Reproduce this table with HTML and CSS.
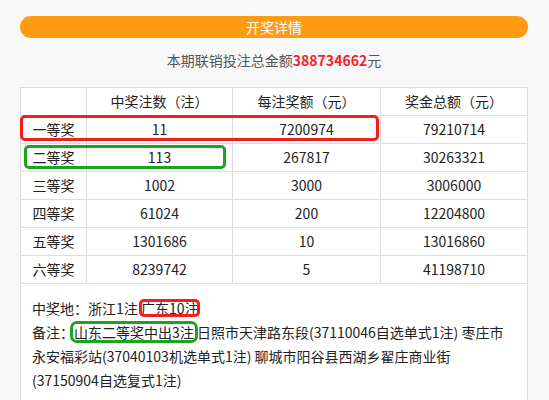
FILE: index.html
```html
<!DOCTYPE html>
<html lang="zh-CN">
<head>
<meta charset="utf-8">
<title>开奖详情</title>
<link rel="stylesheet" href="styles.css">
</head>
<body>
<div class="wrap">
  <div class="bar">开奖详情</div>
  <div class="sum">本期联销投注总金额<b class="amt">388734662</b>元</div>
  <div class="tbl-wrap">
    <table class="tbl">
      <colgroup><col class="c1"><col class="c2"><col class="c3"><col class="c4"></colgroup>
      <tr><th></th><th>中奖注数（注）</th><th>每注奖额（元）</th><th>奖金总额（元）</th></tr>
      <tr><td>一等奖</td><td>11</td><td>7200974</td><td>79210714</td></tr>
      <tr><td>二等奖</td><td>113</td><td>267817</td><td>30263321</td></tr>
      <tr><td>三等奖</td><td>1002</td><td>3000</td><td>3006000</td></tr>
      <tr><td>四等奖</td><td>61024</td><td>200</td><td>12204800</td></tr>
      <tr><td>五等奖</td><td>1301686</td><td>10</td><td>13016860</td></tr>
      <tr><td>六等奖</td><td>8239742</td><td>5</td><td>41198710</td></tr>
    </table>
    <div class="mark mark-red"></div>
    <div class="mark mark-green"></div>
  </div>
  <div class="notes">
    <p>中奖地：浙江1注 <span class="hl hl-red">广东10注</span></p>
    <p>备注：<span class="hl hl-green">山东二等奖中出3注</span> 日照市天津路东段(37110046自选单式1注) 枣庄市永安福彩站(37040103机选单式1注) 聊城市阳谷县西湖乡翟庄商业街(37150904自选复式1注)</p>
  </div>
</div>
</body>
</html>
```

FILE: styles.css
```css
html, body {
  margin: 0;
  padding: 0;
  background: #f8f8f8;
}
body {
  font-family: "Noto Sans CJK SC", "Microsoft YaHei", sans-serif;
  font-size: 14px;
  color: #333;
}
.wrap {
  width: 508px;
  margin-left: 20px;
  padding-top: 16px;
}
.bar {
  height: 22px;
  line-height: 22px;
  border-radius: 11px;
  background: #ff9a14;
  color: #fff;
  text-align: center;
  font-size: 14px;
}
.sum {
  margin-top: 10px;
  height: 24px;
  line-height: 24px;
  text-align: center;
  color: #555;
}
.amt {
  color: #f5222d;
  font-weight: bold;
}
.tbl-wrap {
  position: relative;
  margin-top: 15px;
}
.tbl {
  width: 100%;
  border-collapse: collapse;
  background: #fff;
  table-layout: fixed;
}
.c1 { width: 66px; }
.c2 { width: 146px; }
.c3 { width: 148px; }
.tbl th, .tbl td {
  border: 1px solid #ddd;
  height: 27px;
  padding: 0;
  text-align: center;
  font-weight: normal;
  color: #222;
  line-height: 27px;
}
.mark {
  position: absolute;
  border-radius: 5px;
  box-sizing: border-box;
}
.mark-red {
  left: 0;
  top: 28px;
  width: 359px;
  height: 26px;
  border: 3px solid #f21d1d;
}
.mark-green {
  left: 4px;
  top: 58px;
  width: 202px;
  height: 24px;
  border: 3px solid #1ca51c;
}
.notes {
  background: #fff;
  border-left: 1px solid #ddd;
  border-right: 1px solid #ddd;
  padding: 12px 10px 30px 11px;
  color: #222;
}
.notes p {
  margin: 0;
  line-height: 24px;
}
.hl {
  display: inline-block;
  line-height: 14px;
  height: 14px;
  border-radius: 3px;
}
.hl-red {
  outline: 3px solid #f21d1d;
  outline-offset: -1px;
}
.hl-green {
  outline: 3px solid #1ca51c;
  outline-offset: 1px;
}
```
